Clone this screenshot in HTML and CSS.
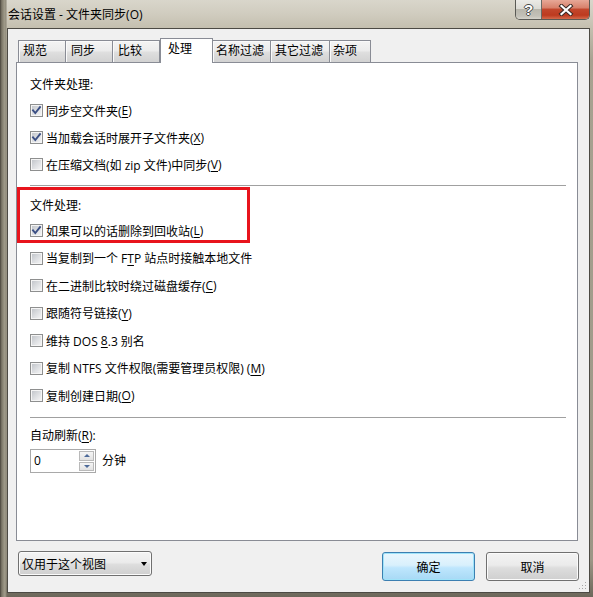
FILE: index.html
```html
<!DOCTYPE html>
<html lang="zh-CN">
<head>
<meta charset="utf-8">
<title>会话设置 - 文件夹同步</title>
<link rel="stylesheet" href="styles.css">
</head>
<body>
<div class="window">
  <div class="titlebar">
    <span class="title">会话设置 - 文件夹同步(O)</span>
    <div class="caption-btns">
      <div class="cap help"><span class="q">?</span></div>
      <div class="cap close">
        <svg width="16" height="12" viewBox="0 0 16 12"><path class="xo" d="M3.5 2 L12.5 10 M12.5 2 L3.5 10"/><path class="xi" d="M3.5 2 L12.5 10 M12.5 2 L3.5 10"/></svg>
      </div>
    </div>
  </div>
  <div class="client">
    <div class="tabs">
      <div class="tab t1">规范</div>
      <div class="tab t2">同步</div>
      <div class="tab t3">比较</div>
      <div class="tab t4 sel">处理</div>
      <div class="tab t5">名称过滤</div>
      <div class="tab t6">其它过滤</div>
      <div class="tab t7">杂项</div>
    </div>
    <div class="panel">
      <div class="heading">文件夹处理:</div>
      <div class="row first"><span class="cb"><svg class="chk" viewBox="0 0 13 13"><path d="M3 6.3 L5.3 9 L10 3.2"/></svg></span>同步空文件夹(<u>E</u>)</div>
      <div class="row"><span class="cb"><svg class="chk" viewBox="0 0 13 13"><path d="M3 6.3 L5.3 9 L10 3.2"/></svg></span>当加载会话时展开子文件夹(<u>X</u>)</div>
      <div class="row"><span class="cb"></span>在压缩文档(如 zip 文件)中同步(<u>V</u>)</div>
      <div class="sep s1"></div>
      <div class="heading h2">文件处理:</div>
      <div class="row r27 first2"><span class="cb"><svg class="chk" viewBox="0 0 13 13"><path d="M3 6.3 L5.3 9 L10 3.2"/></svg></span>如果可以的话删除到回收站(<u>L</u>)</div>
      <div class="row r28"><span class="cb"></span>当复制到一个 F<u>T</u>P 站点时接触本地文件</div>
      <div class="row r27"><span class="cb"></span>在二进制比较时绕过磁盘缓存(<u>C</u>)</div>
      <div class="row r28"><span class="cb"></span>跟随符号链接(<u>Y</u>)</div>
      <div class="row r27"><span class="cb"></span>维持 DOS <u>8</u>.3 别名</div>
      <div class="row r28"><span class="cb"></span>复制 NTFS 文件权限(需要管理员权限) (<u>M</u>)</div>
      <div class="row r27"><span class="cb"></span>复制创建日期(<u>O</u>)</div>
      <div class="sep s2"></div>
      <div class="heading h3">自动刷新(<u>R</u>):</div>
      <div class="spinrow">
        <div class="spin">
          <span class="val">0</span>
          <div class="spinbtns">
            <div class="sb up"><span class="tri-up"></span></div>
            <div class="sb down"><span class="tri-down"></span></div>
          </div>
        </div>
        <span class="unit">分钟</span>
      </div>
      <div class="highlight"></div>
    </div>
    <div class="footer">
      <div class="combo"><span>仅用于这个视图</span><span class="arrow"></span></div>
      <div class="btn ok">确定</div>
      <div class="btn cancel">取消</div>
    </div>
    <svg class="grip" width="8" height="8" viewBox="0 0 8 8">
      <rect x="6" y="0" width="1" height="1"/><rect x="3" y="3" width="1" height="1"/><rect x="6" y="3" width="1" height="1"/>
      <rect x="0" y="6" width="1" height="1"/><rect x="3" y="6" width="1" height="1"/><rect x="6" y="6" width="1" height="1"/>
    </svg>
  </div>
</div>
</body>
</html>
```

FILE: styles.css
```css
* { box-sizing: border-box; }
html, body { margin: 0; padding: 0; }
body {
  width: 593px;
  height: 597px;
  overflow: hidden;
  font-family: "Open Sans", "Noto Sans CJK SC", sans-serif;
  font-size: 12px;
  color: #000;
  background: #bdb8a8;
}
u { text-decoration: underline; text-underline-offset: 2px; text-decoration-thickness: 1px; }

.window {
  width: 593px;
  height: 597px;
  padding: 0 3px 4px 7px;
  display: flex;
  flex-direction: column;
  background:
    linear-gradient(90deg, #3f3b33 0px, #6d685b 1px, #8d8878 3px, #a29d8c 5px, #8a8576 6px, rgba(0,0,0,0) 7px),
    linear-gradient(180deg, #d9d6cb 0px, #d0ccbf 14px, #c4bfaf 28px, #a8a291 60px, #9c9686 560px, #6c675a 597px);
}

.titlebar {
  height: 28px;
  flex: none;
  display: flex;
  align-items: flex-start;
}
.title {
  margin-left: 1px;
  padding-top: 6px;
  line-height: 18px;
  font-size: 12px;
  color: #000;
}
.caption-btns {
  margin-left: auto;
  display: flex;
  height: 20px;
  border: 1px solid #5a5a55;
  border-top: none;
  border-radius: 0 0 5px 5px;
  overflow: hidden;
}
.cap {
  height: 19px;
  display: flex;
  align-items: center;
  justify-content: center;
}
.help {
  width: 26px;
  border-right: 1px solid #6a6a65;
  background: linear-gradient(180deg, #ebeae6 0%, #dcdbd5 45%, #b9b7ad 50%, #c3c1b8 85%, #d6d4cc 100%);
}
.q {
  font-family: "Liberation Sans", sans-serif;
  font-weight: bold;
  font-size: 15px;
  line-height: 15px;
  color: #fff;
  text-shadow: 1px 0 0 #4a4a48, -1px 0 0 #4a4a48, 0 1px 0 #4a4a48, 0 -1px 0 #4a4a48;
}
.close {
  width: 47px;
  background: linear-gradient(180deg, #e7a897 0%, #d8826c 40%, #c2462c 50%, #bd3a1f 80%, #d56a4b 100%);
}
.close svg { display: block; }
.xo { stroke: #3c2b26; stroke-width: 4.2; fill: none; stroke-linecap: square; }
.xi { stroke: #ffffff; stroke-width: 2.2; fill: none; stroke-linecap: square; }

.client {
  flex: 1;
  position: relative;
  background: #f0f0f0;
  border: 1px solid #4c4a44;
  padding: 9px 10px 0 8px;
}

.tabs {
  display: flex;
  align-items: flex-end;
  height: 24px;
  padding-left: 2px;
}
.tab {
  height: 22px;
  border: 1px solid #898c95;
  border-bottom: none;
  background: linear-gradient(180deg, #f4f4f4 0%, #ececec 45%, #dedede 55%, #d2d2d2 100%);
  box-shadow: inset 1px 1px 0 #fafafa;
  padding-left: 4px;
  line-height: 20px;
  white-space: nowrap;
}
.t1 { width: 48px; }
.t2 { width: 47px; border-left: none; padding-left: 5px; }
.t3 { width: 47px; border-left: none; padding-left: 5px; }
.t4 { width: 53px; }
.t5 { width: 59px; margin-left: -1px; padding-left: 3px; }
.t6 { width: 59px; border-left: none; padding-left: 4px; }
.t7 { width: 41px; border-left: none; padding-left: 3px; }
.tab.sel {
  height: 25px;
  margin-bottom: -1px;
  background: #fff;
  box-shadow: none;
  padding-left: 7px;
  position: relative;
  z-index: 2;
  line-height: 20px;
}

.panel {
  position: relative;
  z-index: 1;
  width: 562px;
  height: 479px;
  border: 1px solid #898c95;
  background: #fff;
  padding: 12px 0 0 13px;
}
.heading {
  height: 20px;
  line-height: 20px;
}
.row {
  display: flex;
  align-items: center;
  height: 27px;
  white-space: pre;
}
.row.first { margin-top: 2px; }
.r27 { height: 27px; }
.r28 { height: 28px; }
.row.first2 { margin-top: 1px; }
.cb {
  flex: none;
  position: relative;
  width: 13px;
  height: 13px;
  margin-right: 3px;
  border: 1px solid #8e8f8f;
  background: #f5f5f5;
}
.cb::before {
  content: "";
  position: absolute;
  left: 1px;
  top: 1px;
  width: 9px;
  height: 9px;
  background: linear-gradient(135deg, #c3c6cb 0%, #dcdee1 50%, #f3f3f4 100%);
}
.chk {
  position: absolute;
  left: -1px;
  top: -1px;
  width: 13px;
  height: 13px;
  z-index: 1;
}
.chk path {
  fill: none;
  stroke: #3b4f84;
  stroke-width: 1.9;
  stroke-linecap: square;
  stroke-linejoin: miter;
}

.sep {
  width: 536px;
  height: 1px;
  background: #a0a0a0;
}
.s1 { margin-top: 7px; }
.s2 { margin-top: 8px; }
.h2 { margin-top: 10px; }
.h3 { margin-top: 8px; }

.spinrow {
  margin-top: 3px;
  display: flex;
  align-items: center;
}
.spin {
  width: 66px;
  height: 24px;
  border: 1px solid #a9a9a9;
  background: #fff;
  display: flex;
  align-items: center;
}
.val {
  flex: 1;
  padding-left: 3px;
  line-height: 16px;
}
.spinbtns {
  width: 16px;
  height: 22px;
  display: flex;
  flex-direction: column;
  gap: 1px;
  padding: 1px 1px 1px 0;
}
.sb {
  flex: 1;
  border: 1px solid #b9b9b9;
  background: linear-gradient(180deg, #f5f5f5, #e2e2e2);
  display: flex;
  align-items: center;
  justify-content: center;
}
.tri-up, .tri-down {
  width: 0;
  height: 0;
  border-left: 3px solid transparent;
  border-right: 3px solid transparent;
}
.tri-up { border-bottom: 3px solid #4d6a99; }
.tri-down { border-top: 3px solid #4d6a99; }
.unit { margin-left: 6px; line-height: 16px; }

.highlight {
  position: absolute;
  left: 0;
  top: 124px;
  width: 233px;
  height: 56px;
  border: 3px solid #e8141c;
  pointer-events: none;
}

.footer {
  display: flex;
  align-items: flex-start;
  margin-top: 10px;
  padding-left: 2px;
}
.combo {
  width: 134px;
  height: 25px;
  border: 1px solid #707070;
  border-radius: 3px;
  background: linear-gradient(180deg, #f3f3f3 0%, #ebebeb 45%, #dddddd 55%, #cfcfcf 100%);
  box-shadow: inset 0 0 0 1px #fbfbfb;
  display: flex;
  align-items: center;
  padding-left: 3px;
  position: relative;
}
.arrow {
  position: absolute;
  left: 122px;
  top: 10px;
  width: 0;
  height: 0;
  border-left: 3.5px solid transparent;
  border-right: 3.5px solid transparent;
  border-top: 4px solid #000;
}
.btn {
  width: 93px;
  height: 29px;
  margin-top: 1px;
  border: 1px solid #707070;
  border-radius: 3px;
  background: linear-gradient(180deg, #f3f3f3 0%, #ebebeb 45%, #dddddd 55%, #cfcfcf 100%);
  box-shadow: inset 0 0 0 1px #fbfbfb;
  display: flex;
  align-items: center;
  justify-content: center;
}
.ok {
  margin-left: auto;
  border-color: #3c7fb1;
  background: linear-gradient(180deg, #eaf6fd 0%, #d9f0fc 45%, #bee6fd 55%, #a7d9f5 100%);
  box-shadow: inset 0 0 0 1px #9fe3f9;
}
.cancel { margin-left: 11px; }

.grip {
  position: absolute;
  right: 2px;
  bottom: 2px;
  fill: #a5a5a5;
}
```
